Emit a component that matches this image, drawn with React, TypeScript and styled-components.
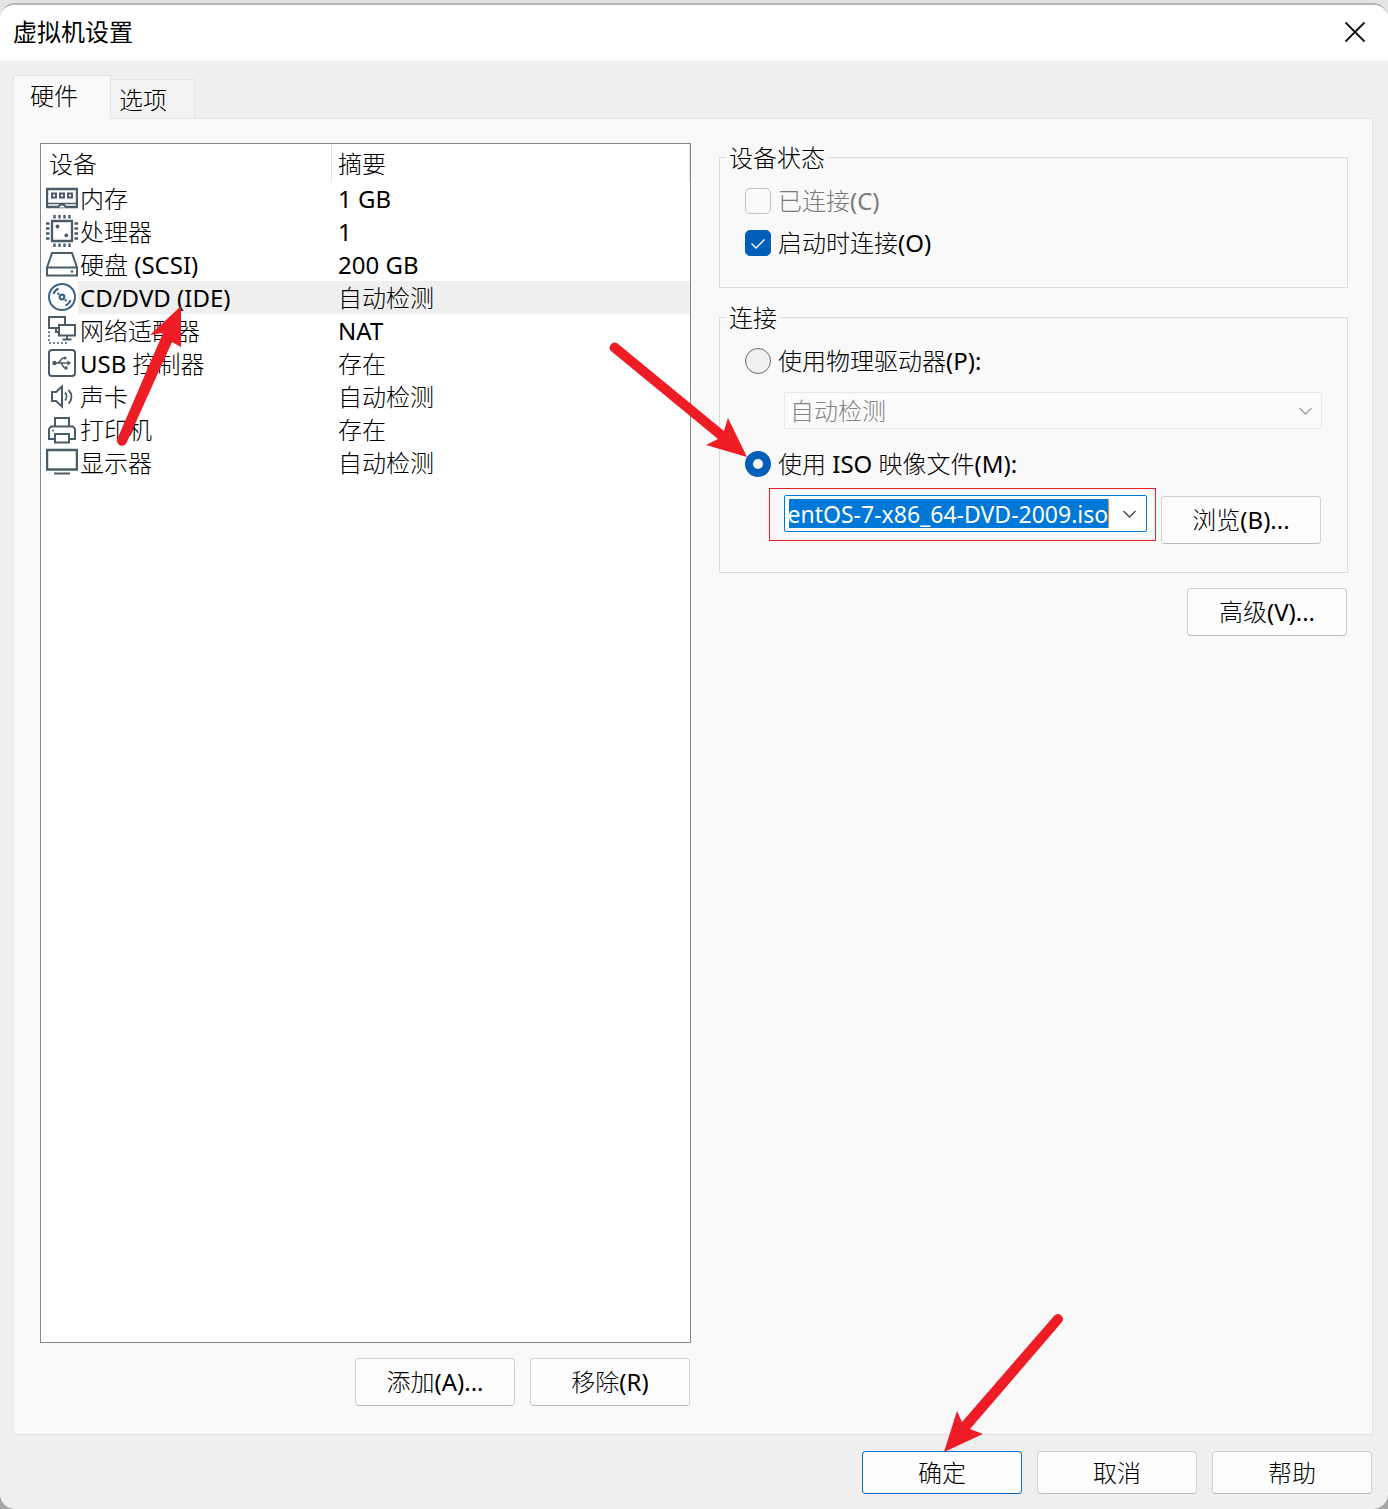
import React, { useLayoutEffect, useRef, useState } from "react";
import styled, { createGlobalStyle } from "styled-components";

const line = "#dcdcdc";
const accent = "#005fb8";
const glyph = "#4a5c68";
const markRed = "#ee1c25";

const GlobalStyle = createGlobalStyle`
  * { box-sizing: border-box; }
  body {
    margin: 0;
    background: linear-gradient(#e4e4e4, #a6a6a6);
    color: #000;
    font-family: "Noto Sans", "Noto Sans CJK SC Light", "Noto Sans CJK SC", sans-serif;
    font-size: 24px;
    line-height: 32px;
  }
  button, input, select { font: inherit; color: inherit; margin: 0; }
`;

const Frame = styled.div`
  min-height: 100vh;
  padding-top: 3px;
  display: flex;
`;

const Dialog = styled.main`
  flex: 1;
  min-width: 0;
  display: flex;
  flex-direction: column;
  overflow: hidden;
  border-top: 2px solid #b6b6b6;
  border-radius: 15px;
  background: #efefef;
`;

const TitleBar = styled.header`
  height: 56px;
  flex: none;
  padding: 0 21px 2px 13px;
  display: flex;
  align-items: center;
  justify-content: space-between;
  background: #fff;
`;

const Title = styled.h1`
  margin: 0;
  font-family: "Noto Sans", "Noto Sans CJK SC", sans-serif;
  font-size: 24px;
  font-weight: 400;
`;

const IconButton = styled.button`
  display: flex;
  padding: 0;
  border: 0;
  background: none;
`;

const Body = styled.div`
  flex: 1;
  padding: 14px 15px 15px 13px;
  display: flex;
  flex-direction: column;
`;

const Tabs = styled.div`
  display: flex;
  align-items: flex-end;
`;

const Tab = styled.button<{ $active?: boolean }>`
  position: relative;
  z-index: ${(p) => (p.$active ? 1 : 0)};
  width: ${(p) => (p.$active ? 98 : 84)}px;
  height: ${(p) => (p.$active ? 44 : 40)}px;
  margin-bottom: -1px;
  padding: ${(p) => (p.$active ? "0 0 2px 16px" : "2px 0 0 8px")};
  border: 1px solid #e4e4e4;
  border-bottom-color: ${(p) => (p.$active ? "#f9f9f9" : "#e4e4e4")};
  border-left-width: ${(p) => (p.$active ? 1 : 0)}px;
  background: ${(p) => (p.$active ? "#f9f9f9" : "#f2f2f2")};
  text-align: left;
`;

const Panel = styled.section`
  flex: 1;
  padding: 24px 24px 28px 26px;
  display: grid;
  grid-template-columns: 651fr 629fr;
  column-gap: 28px;
  border: 1px solid #e4e4e4;
  background: #f9f9f9;
`;

const Column = styled.div`
  min-width: 0;
  display: flex;
  flex-direction: column;
  gap: 15px;
`;

const ListBox = styled.div`
  position: relative;
  flex: 1;
  border: 1px solid #828790;
  background: #fff;
`;

const DeviceTable = styled.table`
  width: 100%;
  border-collapse: separate;
  border-spacing: 0;
  table-layout: fixed;
`;

const HeadCell = styled.th<{ $first?: boolean }>`
  width: ${(p) => (p.$first ? "291px" : "auto")};
  height: 38px;
  padding: 2px 0 0 ${(p) => (p.$first ? 8 : 6)}px;
  border-right: 1px solid #e5e5e5;
  text-align: left;
  font-weight: 400;
`;

const Row = styled.tr<{ $selected?: boolean }>`
  background: ${(p) =>
    p.$selected ? "linear-gradient(90deg, #fff 37px, #efefef 37px)" : "none"};
`;

const Cell = styled.td`
  height: 33px;
  padding: 0 0 0 6px;
  white-space: nowrap;
`;

const Device = styled.div`
  height: 33px;
  margin-left: -1px;
  display: flex;
  align-items: center;
  gap: 2px;
`;

const Actions = styled.div`
  padding-right: 1px;
  display: flex;
  justify-content: flex-end;
  gap: 15px;
`;

const Footer = styled(Actions)`
  padding-top: 16px;
`;

const PushButton = styled.button<{ $primary?: boolean; $short?: boolean }>`
  flex: none;
  width: 160px;
  height: ${(p) => (p.$short ? 43 : 48)}px;
  padding: 0;
  border: 1px solid ${(p) => (p.$primary ? "#0078d4" : "#d0d0d0")};
  border-bottom-color: ${(p) => (p.$primary ? "#0067c0" : "#bababa")};
  border-radius: 4px;
  background: #fdfdfd;
`;

const Group = styled.fieldset`
  min-width: 0;
  margin: 0;
  padding: 9px 25px 23px;
  border: 1px solid ${line};
`;

const Legend = styled.legend`
  height: 28px;
  margin-left: -19px;
  padding: 0 3px;
  line-height: 30px;
`;

const Choice = styled.label<{ $muted?: boolean }>`
  height: 42px;
  display: flex;
  align-items: center;
  gap: 7px;
  color: ${(p) => (p.$muted ? "#7a7a7a" : "#000")};
`;

const Mark = styled.span`
  position: relative;
  display: flex;
  width: 26px;
  height: 26px;
`;

const Tick = styled.svg`
  position: absolute;
  inset: 0;
  pointer-events: none;
`;

const CheckInput = styled.input`
  appearance: none;
  width: 26px;
  height: 26px;
  border: 1px solid #868686;
  border-radius: 5px;
  background: #f9f9f9;
  &:disabled { border-color: #c3c3c3; }
  &:checked { border-color: ${accent}; background: ${accent}; }
`;

const RadioInput = styled.input`
  appearance: none;
  width: 26px;
  height: 26px;
  border: 1px solid #6a6a6a;
  border-radius: 50%;
  background: #f1f1f1;
  &:checked { border: 8px solid ${accent}; background: #fff; }
`;

const DriveField = styled.div`
  position: relative;
  margin: 10px 0 14px 39px;
  display: flex;
`;

const DriveSelect = styled.select`
  appearance: none;
  flex: 1;
  height: 37px;
  padding: 0 36px 0 5px;
  border: 1px solid #e8e8e8;
  border-radius: 2px;
  background: #fbfbfb;
  &:disabled { color: #838383; opacity: 1; }
`;

const SelectArrow = styled.span`
  position: absolute;
  right: 9px;
  top: 12px;
  display: flex;
  color: #9a9a9a;
  pointer-events: none;
`;

const FileRow = styled.div`
  margin: 3px 1px 5px 24px;
  display: flex;
  align-items: flex-end;
  gap: 5px;
`;

const Highlight = styled.div`
  flex: 1;
  min-width: 0;
  height: 53px;
  margin-bottom: 3px;
  padding: 6px 8px 8px 14px;
  border: 1px solid ${markRed};
`;

const ComboBox = styled.div`
  height: 37px;
  padding: 2px 9px 2px 4px;
  display: flex;
  align-items: center;
  gap: 13px;
  border: 1px solid #0078d4;
  border-radius: 2px;
  background: #fff;
  color: #444;
`;

const FileInput = styled.input`
  flex: 1;
  min-width: 0;
  height: 29px;
  padding: 0;
  border: 0;
  border-right: 1px solid #ff8728;
  outline: 0;
  background: #0078d7;
  color: #fff;
  font-size: 23px;
`;

const Arrow = styled.svg<{ $x: number; $y: number }>`
  position: absolute;
  left: ${(p) => p.$x}px;
  top: ${(p) => p.$y}px;
  z-index: 2;
  fill: ${markRed};
  pointer-events: none;
`;

const Anchor = styled.span`
  position: relative;
  display: flex;
`;

const Chevron = () => (
  <svg width="15" height="14" viewBox="0 0 15 14" fill="none" stroke="currentColor" strokeWidth="1.3" aria-hidden="true">
    <path d="M1.5 4 7.5 10l6-6" />
  </svg>
);

const drawings: Record<string, React.ReactNode> = {
  memory: (
    <>
      <path d="M1 7h30v18H1z" strokeWidth="2.4" />
      <path d="M1 21.5h30" strokeWidth="1.5" />
      <path d="M6 11.5h4v4H6zM14 11.5h4v4h-4zM22 11.5h4v4h-4z" />
      <path d="M12.5 25.5a3.5 3 0 0 1 7 0" fill="#fff" />
    </>
  ),
  cpu: (
    <>
      <path d="M6 6h20v20H6z" strokeWidth="2.3" />
      <path
        d="M8.5 0v3.5M13.5 0v3.5M18.5 0v3.5M23.5 0v3.5M8.5 28.5V32M13.5 28.5V32M18.5 28.5V32M23.5 28.5V32M0 8.5h3.5M0 13.5h3.5M0 18.5h3.5M0 23.5h3.5M28.5 8.5H32M28.5 13.5H32M28.5 18.5H32M28.5 23.5H32"
        strokeWidth="2.4"
      />
      <circle cx="11.5" cy="11.5" r="1.9" fill={glyph} stroke="none" />
      <circle cx="20.3" cy="20.3" r="1.9" fill={glyph} stroke="none" />
    </>
  ),
  disk: (
    <>
      <path d="M1 19.5 6 5h20l5 14.5v8H1zM1 19.5h30" />
      <circle cx="26" cy="23.5" r="1.3" fill={glyph} stroke="none" />
    </>
  ),
  disc: (
    <g stroke="#3d6484">
      <circle cx="16" cy="16" r="13" />
      <circle cx="16" cy="16" r="2.3" strokeWidth="2.2" />
      <path d="M7.5 13a9 9 0 0 1 5-5.500M11.500 13.500l1.500-1.500M24.500 19a9 9 0 0 1-5 5.500M20.500 18.500l-1.500 1.500" />
    </g>
  ),
  network: (
    <>
      <path d="M12 14H3V3h16v7" />
      <path d="M13 11h16v10.5H13zM21 21.5V25M16.5 25.5h9" />
      <path d="M10 14v4h3" />
      <path d="M3 17v12h19" strokeDasharray="2 2" strokeWidth="1.5" />
    </>
  ),
  usb: (
    <>
      <rect x="3" y="3" width="26" height="26" rx="3" />
      <path d="M8 16h15M11.500 16c3 0 3-5 6-5h2M14 16c3 0 2.500 5 5 5h2" strokeWidth="1.5" />
      <path d="m21.500 13.300 3.500 2.700-3.500 2.700z" fill={glyph} stroke="none" />
      <circle cx="8.500" cy="16" r="2.200" fill={glyph} stroke="none" />
      <circle cx="19" cy="11" r="1.500" fill={glyph} stroke="none" />
      <path d="M18.500 19.500h3v3h-3z" fill={glyph} stroke="none" />
    </>
  ),
  sound: (
    <>
      <path d="M6 12h4l6-5.500v20L10 21H6z" />
      <path d="M19 12.500c2 2 2 5.500 0 8M22.500 10c4 4 4 9.500 0 13.500" strokeWidth="1.800" />
    </>
  ),
  printer: (
    <>
      <path d="M9 13V5h14v8M9 26H3V16l2-2.500h22l2 2.500v10h-6" />
      <path d="M9 21h14v8.500H9z" />
      <path d="M6 17.500h2" strokeWidth="1.5" />
    </>
  ),
  display: (
    <>
      <path d="M1 4h30v19.500H1z" strokeWidth="2.5" />
      <path d="M8 27.500h16" />
    </>
  ),
};

const DeviceIcon = ({ name }: { name: string }) => (
  <svg width="32" height="33" viewBox="0 0 32 33" fill="none" stroke={glyph} strokeWidth="2" aria-hidden="true">
    {drawings[name]}
  </svg>
);

const devices = [
  { icon: "memory", name: "内存", summary: "1 GB" },
  { icon: "cpu", name: "处理器", summary: "1" },
  { icon: "disk", name: "硬盘 (SCSI)", summary: "200 GB" },
  { icon: "disc", name: "CD/DVD (IDE)", summary: "自动检测", selected: true },
  { icon: "network", name: "网络适配器", summary: "NAT" },
  { icon: "usb", name: "USB 控制器", summary: "存在" },
  { icon: "sound", name: "声卡", summary: "自动检测" },
  { icon: "printer", name: "打印机", summary: "存在" },
  { icon: "display", name: "显示器", summary: "自动检测" },
];

export default function App() {
  const fileRef = useRef<HTMLInputElement>(null);
  const [file, setFile] = useState("CentOS-7-x86_64-DVD-2009.iso");
  const [source, setSource] = useState("iso");
  const [atPowerOn, setAtPowerOn] = useState(true);

  // Keep the end of a long file name in view.
  useLayoutEffect(() => {
    const box = fileRef.current;
    if (box) box.scrollLeft = box.scrollWidth;
  }, []);

  return (
    <Frame>
      <GlobalStyle />
      <Dialog>
        <TitleBar>
          <Title>虚拟机设置</Title>
          <IconButton type="button" aria-label="关闭">
            <svg width="24" height="24" viewBox="0 0 24 24" fill="none" stroke="#111" strokeWidth="1.8" aria-hidden="true">
              <path d="m2.500 2.500 19 19m0-19-19 19" />
            </svg>
          </IconButton>
        </TitleBar>
        <Body>
          <Tabs role="tablist">
            <Tab type="button" role="tab" aria-selected="true" $active>硬件</Tab>
            <Tab type="button" role="tab" aria-selected="false">选项</Tab>
          </Tabs>
          <Panel>
            <Column>
              <ListBox>
                <DeviceTable>
                  <thead>
                    <tr>
                      <HeadCell $first>设备</HeadCell>
                      <HeadCell>摘要</HeadCell>
                    </tr>
                  </thead>
                  <tbody>
                    {devices.map((d) => (
                      <Row key={d.icon} $selected={d.selected}>
                        <Cell>
                          <Device>
                            <DeviceIcon name={d.icon} />
                            {d.name}
                          </Device>
                        </Cell>
                        <Cell>{d.summary}</Cell>
                      </Row>
                    ))}
                  </tbody>
                </DeviceTable>
                <Arrow $x={75} $y={161} width="70" height="142" viewBox="0 0 70 142" aria-hidden="true">
                  <path d="M65 1 34 30l13-2L1.500 133.500a5 5 0 0 0 9 4.500L56 37l9 5z" />
                </Arrow>
              </ListBox>
              <Actions>
                <PushButton type="button">添加(A)...</PushButton>
                <PushButton type="button">移除(R)</PushButton>
              </Actions>
            </Column>
            <Column>
              <Group>
                <Legend>设备状态</Legend>
                <Choice $muted>
                  <Mark>
                    <CheckInput type="checkbox" disabled />
                  </Mark>
                  已连接(C)
                </Choice>
                <Choice>
                  <Mark>
                    <CheckInput type="checkbox" checked={atPowerOn} onChange={(e) => setAtPowerOn(e.target.checked)} />
                    {atPowerOn && (
                      <Tick viewBox="0 0 26 26" fill="none" stroke="#fff" strokeWidth="1.4" aria-hidden="true">
                        <path d="m6.500 13.500 4.500 4.500 8.500-8.500" />
                      </Tick>
                    )}
                  </Mark>
                  启动时连接(O)
                </Choice>
              </Group>
              <Group>
                <Legend>连接</Legend>
                <Choice>
                  <Mark>
                    <RadioInput type="radio" name="source" checked={source === "drive"} onChange={() => setSource("drive")} />
                  </Mark>
                  使用物理驱动器(P):
                </Choice>
                <DriveField>
                  <DriveSelect disabled={source !== "drive"} aria-label="物理驱动器">
                    <option>自动检测</option>
                  </DriveSelect>
                  <SelectArrow>
                    <Chevron />
                  </SelectArrow>
                </DriveField>
                <Choice>
                  <Mark>
                    <RadioInput type="radio" name="source" checked={source === "iso"} onChange={() => setSource("iso")} />
                    <Arrow $x={-137} $y={-110} width="140" height="118" viewBox="0 0 140 118" aria-hidden="true">
                      <path d="M139 116 120 77l-4 13L9.500 2.500a5 5 0 0 0-6.500 7.500L110 98l-12 6z" />
                    </Arrow>
                  </Mark>
                  使用 ISO 映像文件(M):
                </Choice>
                <FileRow>
                  <Highlight>
                    <ComboBox>
                      <FileInput ref={fileRef} aria-label="ISO 映像文件" value={file} onChange={(e) => setFile(e.target.value)} />
                      <IconButton type="button" aria-label="展开">
                        <Chevron />
                      </IconButton>
                    </ComboBox>
                  </Highlight>
                  <PushButton type="button">浏览(B)...</PushButton>
                </FileRow>
              </Group>
              <Actions>
                <PushButton type="button">高级(V)...</PushButton>
              </Actions>
            </Column>
          </Panel>
          <Footer>
            <Anchor>
              <PushButton type="button" $primary $short>确定</PushButton>
              <Arrow $x={80} $y={-138} width="124" height="141" viewBox="0 0 124 141" aria-hidden="true">
                <path d="M2 139 15 98l5 11L112.500 2.500a5 5 0 0 1 7.500 6.500L28 116l13 5z" />
              </Arrow>
            </Anchor>
            <PushButton type="button" $short>取消</PushButton>
            <PushButton type="button" $short>帮助</PushButton>
          </Footer>
        </Body>
      </Dialog>
    </Frame>
  );
}
